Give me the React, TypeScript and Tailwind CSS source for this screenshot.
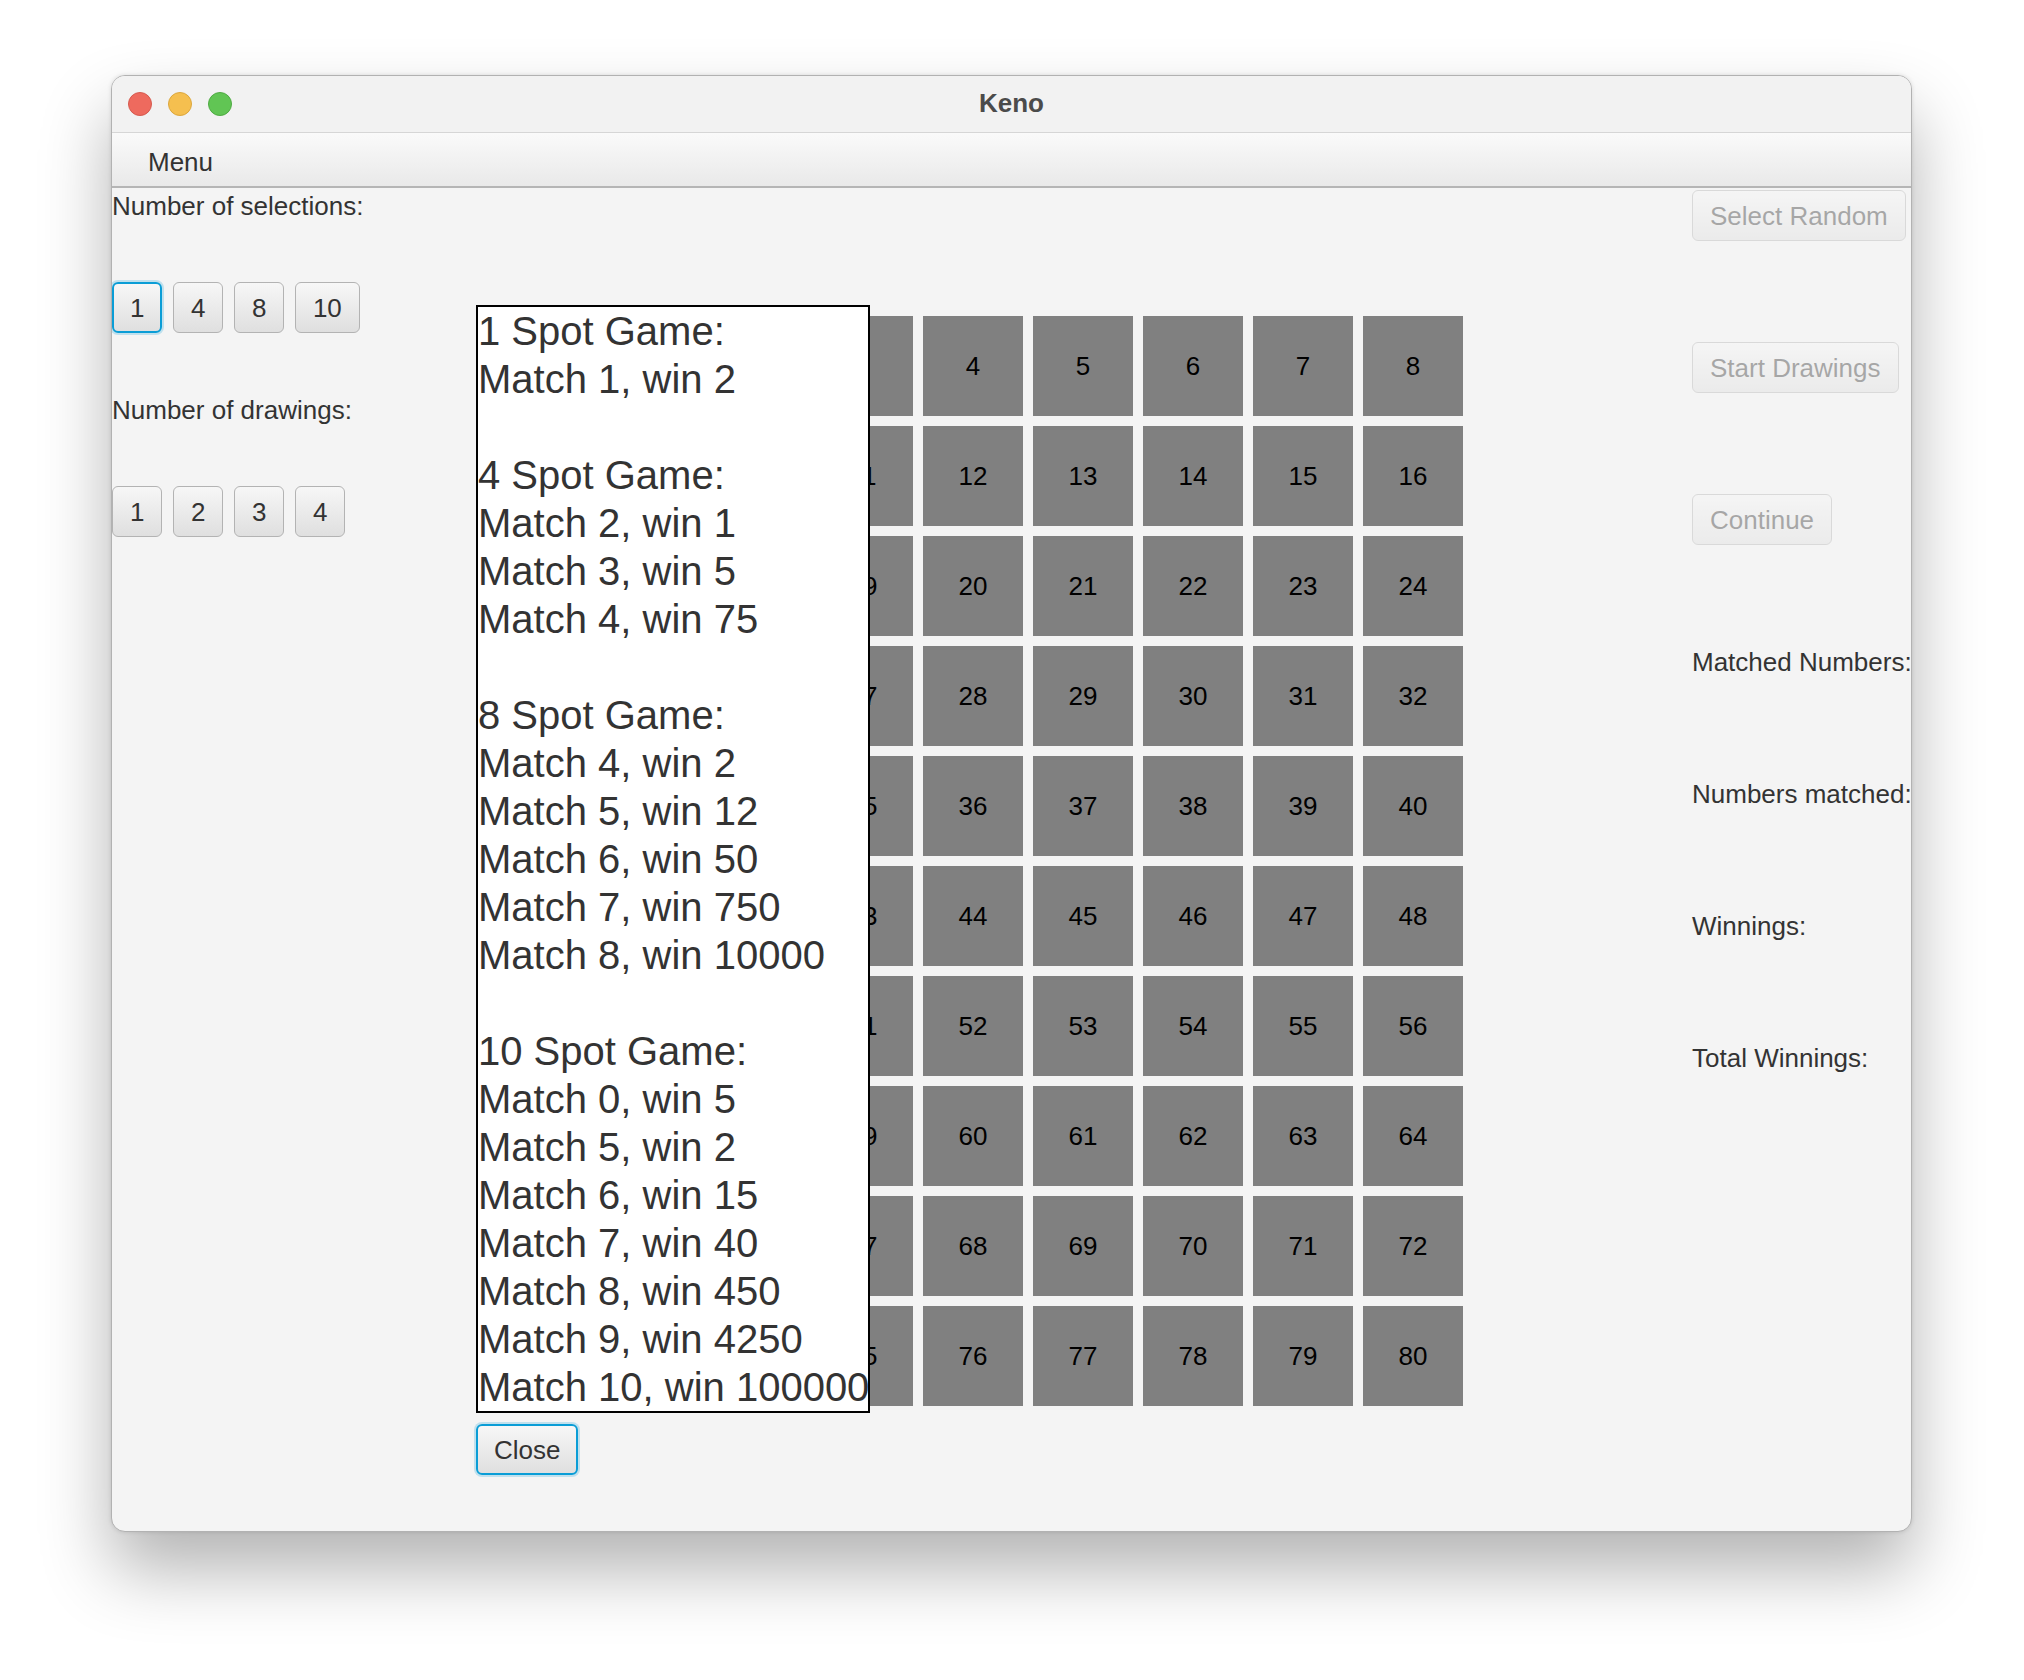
const selections = [1, 4, 8, 10];
const drawings = [1, 2, 3, 4];
const results = ["Matched Numbers:", "Numbers matched:", "Winnings:", "Total Winnings:"];

const payouts = [
  "1 Spot Game:",
  "Match 1, win 2",
  "",
  "4 Spot Game:",
  "Match 2, win 1",
  "Match 3, win 5",
  "Match 4, win 75",
  "",
  "8 Spot Game:",
  "Match 4, win 2",
  "Match 5, win 12",
  "Match 6, win 50",
  "Match 7, win 750",
  "Match 8, win 10000",
  "",
  "10 Spot Game:",
  "Match 0, win 5",
  "Match 5, win 2",
  "Match 6, win 15",
  "Match 7, win 40",
  "Match 8, win 450",
  "Match 9, win 4250",
  "Match 10, win 100000",
];

type FxButtonProps = {
  label: string;
  focused?: boolean;
  disabled?: boolean;
};

const FxButton = ({ label, focused, disabled }: FxButtonProps) => {
  if (focused) {
    return (
      <button className="h-[51px] px-[16px] rounded-[6px] border-2 border-[#0a9dd6] shadow-[0_0_0_2px_rgba(10,157,214,0.22)] bg-linear-to-b from-[#f7f7f7] to-[#dfdfdf] text-[26px] leading-none text-[#333] whitespace-nowrap">
        {label}
      </button>
    );
  }
  return (
    <button
      className={
        disabled
          ? "h-[51px] px-[17px] rounded-[6px] border border-[#b3b3b3] bg-linear-to-b from-[#f7f7f7] to-[#dfdfdf] text-[26px] leading-none text-[#333] whitespace-nowrap opacity-40"
          : "h-[51px] px-[17px] rounded-[6px] border border-[#b3b3b3] bg-linear-to-b from-[#f7f7f7] to-[#dfdfdf] text-[26px] leading-none text-[#333] whitespace-nowrap"
      }
    >
      {label}
    </button>
  );
};

const App = () => {
  const tiles = Array.from({ length: 80 }, (_, i) => i + 1);

  return (
    <div className="w-[2024px] h-[1680px] bg-white pt-[75px] pl-[111px] font-['Liberation_Sans',Arial,sans-serif]">
      <div className="w-[1801px] h-[1457px] rounded-[14px] border border-[#b2b2b2] bg-[#f4f4f4] overflow-hidden flex flex-col shadow-[0_38px_70px_rgba(0,0,0,0.3),0_0_4px_rgba(0,0,0,0.12)]">
        {/* title bar */}
        <div className="h-[57px] shrink-0 grid grid-cols-[1fr_auto_1fr] items-center bg-[#f2f2f2] border-b border-[#d6d6d6]">
          <div className="flex gap-4 pl-4">
            <span className="w-6 h-6 rounded-full bg-[#ee6a5e] border border-[#d65a4f]" />
            <span className="w-6 h-6 rounded-full bg-[#f5bf4f] border border-[#dca73d]" />
            <span className="w-6 h-6 rounded-full bg-[#61c554] border border-[#4fab43]" />
          </div>
          <div className="text-[26px] font-bold text-[#4b4b4b] -mt-[2px]">Keno</div>
          <div />
        </div>

        {/* menu bar */}
        <div className="h-[55px] shrink-0 flex items-center pl-[36px] pt-[5px] bg-linear-to-b from-[#fafafa] to-[#e9e9e9] border-b-2 border-[#b5b5b5] text-[26px] text-[#333]">
          Menu
        </div>

        {/* content */}
        <div className="relative flex-1 flex text-[26px] leading-[32px] text-[#333]">
          <div className="w-[481px] shrink-0 flex flex-col gap-[60px] pt-[2px]">
            <div>Number of selections:</div>
            <div className="flex gap-[10.5px]">
              {selections.map((n) => (
                <FxButton key={n} label={String(n)} focused={n === 1} />
              ))}
            </div>
            <div className="mt-[1px]">Number of drawings:</div>
            <div className="flex gap-[10.5px]">
              {drawings.map((n) => (
                <FxButton key={n} label={String(n)} />
              ))}
            </div>
          </div>

          <div className="shrink-0 pt-[128px]">
            <div className="grid grid-cols-[repeat(8,100px)] gap-[10px]">
              {tiles.map((n) => (
                <div
                  key={n}
                  className="h-[100px] bg-[#808080] flex items-center justify-center text-black text-[26px]"
                >
                  {n}
                </div>
              ))}
            </div>
          </div>

          <div className="ml-[229px] shrink-0 pt-[2px] flex flex-col items-start gap-[101px] whitespace-nowrap">
            <FxButton label="Select Random" disabled />
            <FxButton label="Start Drawings" disabled />
            <FxButton label="Continue" disabled />
            <div className="flex flex-col gap-[100px]">
              {results.map((r) => (
                <div key={r}>{r}</div>
              ))}
            </div>
          </div>

          {/* payout popup */}
          <div className="absolute left-[364px] top-[117px] flex flex-col items-start gap-[11px]">
            <div className="w-[394px] bg-white border-2 border-black text-[40px] leading-[48px] text-[#333] whitespace-nowrap overflow-hidden">
              {payouts.map((line, i) => (
                <div key={i}>{line || "\u00a0"}</div>
              ))}
            </div>
            <FxButton label="Close" focused />
          </div>
        </div>
      </div>
    </div>
  );
};

export default App;
